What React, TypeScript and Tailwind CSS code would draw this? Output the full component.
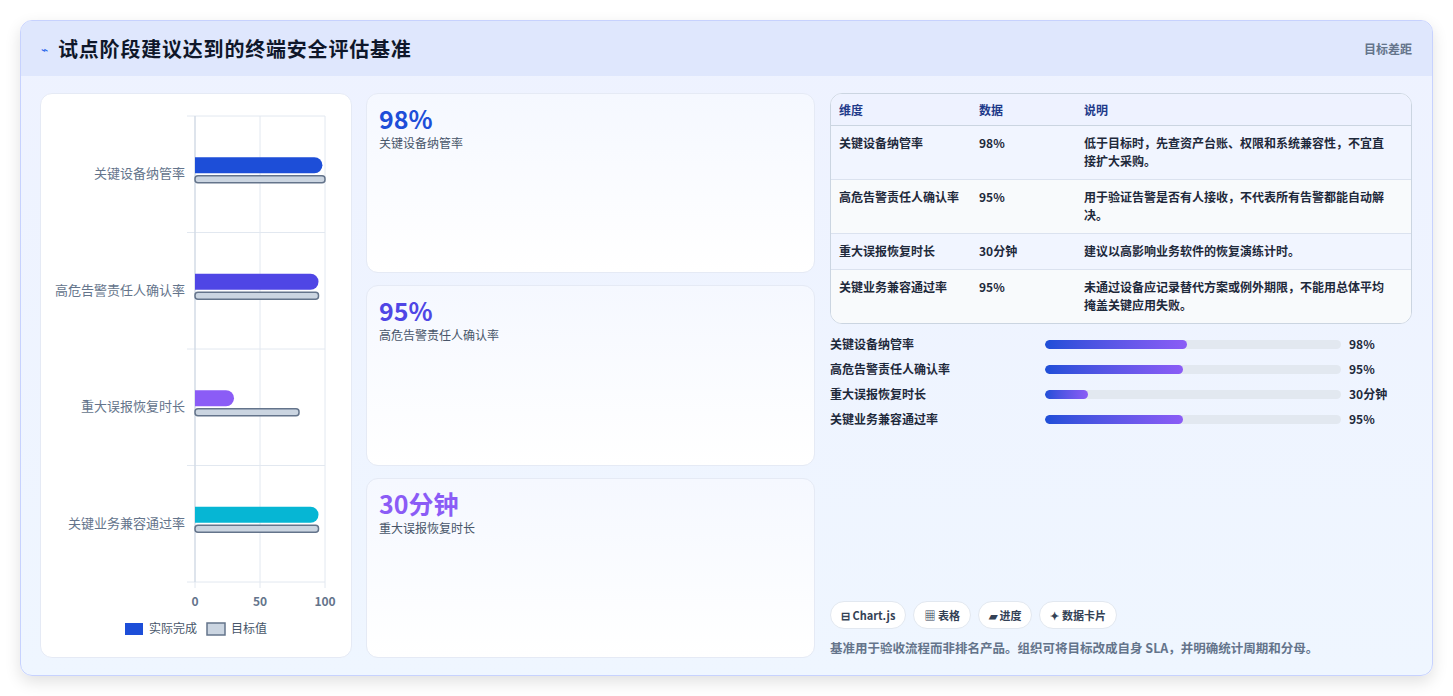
const font = { fontFamily: '"Noto Sans CJK SC", "Noto Sans", sans-serif' };

const rows = [
  { name: "关键设备纳管率", value: "98%", desc: "低于目标时，先查资产台账、权限和系统兼容性，不宜直接扩大采购。", color: "#1d4ed8", actual: 98, target: 100, prog: 142 },
  { name: "高危告警责任人确认率", value: "95%", desc: "用于验证告警是否有人接收，不代表所有告警都能自动解决。", color: "#4f46e5", actual: 95, target: 95, prog: 138 },
  { name: "重大误报恢复时长", value: "30分钟", desc: "建议以高影响业务软件的恢复演练计时。", color: "#8b5cf6", actual: 30, target: 80, prog: 43 },
  { name: "关键业务兼容通过率", value: "95%", desc: "未通过设备应记录替代方案或例外期限，不能用总体平均掩盖关键应用失败。", color: "#06b6d4", actual: 95, target: 95, prog: 138 },
];

function Chart() {
  const x0 = 154, w = 130, top = 22, band = 116.5;
  return (
    <svg width="311" height="563" className="block">
      {[0, 50, 100].map((t) => (
        <line key={t} x1={x0 + (t / 100) * w} x2={x0 + (t / 100) * w} y1={top} y2={top + band * 4 + 6} stroke="#e2e8f0" />
      ))}
      {[0, 1, 2, 3, 4].map((i) => (
        <line key={i} x1={x0 - 8} x2={x0 + w} y1={top + band * i} y2={top + band * i} stroke="#e2e8f0" />
      ))}
      <line x1={x0} x2={x0} y1={top} y2={top + band * 4} stroke="#cbd5e1" />
      {rows.map((r, i) => {
        const cy = top + band * i + band / 2;
        return (
          <g key={r.name}>
            <text x={x0 - 10} y={cy + 4} textAnchor="end" fontSize="13" fill="#64748b">{r.name}</text>
            <path d={`M${x0} ${cy - 17} H${x0 + (r.actual / 100) * w - 8} a8 8 0 0 1 8 8 a8 8 0 0 1 -8 8 H${x0} Z`} fill={r.color} />
            <rect x={x0} y={cy + 1.5} width={(r.target / 100) * w} height={7} rx={3} fill="#cbd5e1" stroke="#64748b" strokeWidth="1.5" />
          </g>
        );
      })}
      {[0, 50, 100].map((t) => (
        <text key={t} x={x0 + (t / 100) * w} y={top + band * 4 + 24} textAnchor="middle" fontSize="12" fontWeight="600" fill="#64748b">{t}</text>
      ))}
      <rect x="84" y="529" width="18" height="12" fill="#1d4ed8" />
      <text x="108" y="539" fontSize="12" fill="#475569">实际完成</text>
      <rect x="166" y="529" width="18" height="12" fill="#cbd5e1" stroke="#64748b" strokeWidth="1.5" />
      <text x="190" y="539" fontSize="12" fill="#475569">目标值</text>
    </svg>
  );
}

export default function App() {
  return (
    <div style={font} className="w-[1453px] h-[696px] bg-white pt-5 px-5">
      <div className="h-[656px] rounded-xl border border-[#c7d2fe] bg-gradient-to-b from-[#eef2ff] to-[#eff6ff] shadow-[0_6px_16px_rgba(0,0,0,0.12)] overflow-hidden flex flex-col">
        <div className="h-[55px] shrink-0 bg-[#dfe7fd] flex items-center justify-between pl-5 pr-5">
          <div className="flex items-center gap-[10px]">
            <span className="text-[#2563eb] text-xs">⌁</span>
            <h1 className="text-[20px] tracking-[0.8px] font-bold text-[#0f172a]">试点阶段建议达到的终端安全评估基准</h1>
          </div>
          <span className="text-[12px] font-semibold text-[#64748b]">目标差距</span>
        </div>
        <div className="flex gap-[14px] pl-[19px] pr-5 pt-[17px] pb-[18px] flex-1">
          <div className="w-[312px] rounded-xl bg-white border border-[#e5eaf5]">
            <Chart />
          </div>
          <div className="w-[449px] flex flex-col gap-3">
            {rows.slice(0, 3).map((r) => (
              <div key={r.name} className="flex-1 rounded-xl bg-gradient-to-b from-[#f5f8ff] to-white border border-[#e5eaf5] px-3 pt-2">
                <div className="text-[25px] font-bold leading-8" style={{ color: r.color }}>{r.value}</div>
                <div className="text-[12px] text-[#475569]">{r.name}</div>
              </div>
            ))}
          </div>
          <div className="flex-1 ml-[1px] flex flex-col">
            <div className="rounded-xl border border-[#cbd5e1] bg-white overflow-hidden text-[12px] text-[#1e293b]">
              <div className="grid grid-cols-[140px_105px_1fr] h-8 items-center px-2 bg-[#eef2ff] font-semibold text-[#1e3a8a] border-b border-[#cbd5e1]">
                <span>维度</span><span>数据</span><span>说明</span>
              </div>
              {rows.map((r, i) => (
                <div key={r.name} className={`grid grid-cols-[140px_105px_1fr] px-2 pt-[8px] pb-[9px] leading-[18px] font-semibold ${i % 2 ? "bg-[#f8fafc]" : "bg-[#f1f5ff]"} ${i < 3 ? "border-b border-[#dbe2ef]" : ""}`}>
                  <span>{r.name}</span><span>{r.value}</span><span className="pr-4">{r.desc}</span>
                </div>
              ))}
            </div>
            <div className="flex flex-col gap-[7px] mt-[11px]">
              {rows.map((r) => (
                <div key={r.name} className="flex items-center h-[18px] text-[12px] font-semibold text-[#1e293b]">
                  <span className="w-[215px]">{r.name}</span>
                  <div className="w-[296px] h-[9px] rounded-full bg-[#e2e8f0] overflow-hidden">
                    <div className="h-full rounded-full bg-gradient-to-r from-[#1d4ed8] to-[#8b5cf6]" style={{ width: r.prog }} />
                  </div>
                  <span className="ml-2">{r.value}</span>
                </div>
              ))}
            </div>
            <div className="flex-1" />
            <div className="flex gap-[7px] text-[11px] font-semibold text-[#334155]">
              <span className="rounded-full bg-white border border-[#e2e8f0] px-[10px] py-[5px]">⊟ Chart.js</span>
              <span className="rounded-full bg-white border border-[#e2e8f0] px-[10px] py-[5px]">▦ 表格</span>
              <span className="rounded-full bg-white border border-[#e2e8f0] px-[10px] py-[5px]">▰ 进度</span>
              <span className="rounded-full bg-white border border-[#e2e8f0] px-[10px] py-[5px]">✦ 数据卡片</span>
            </div>
            <p className="mt-[10px] text-[12.5px] font-semibold text-[#64748b]">基准用于验收流程而非排名产品。组织可将目标改成自身 SLA，并明确统计周期和分母。</p>
          </div>
        </div>
      </div>
    </div>
  );
}
